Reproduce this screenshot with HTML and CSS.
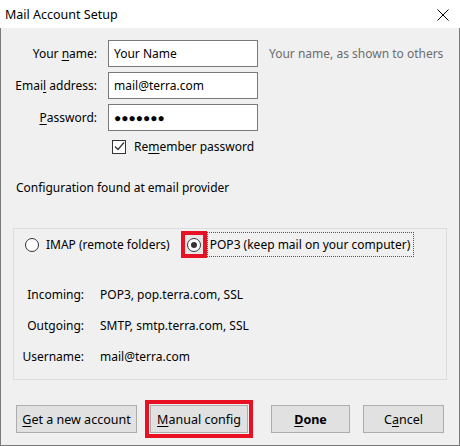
FILE: index.html
```html
<!DOCTYPE html>
<html lang="en">
<head>
  <meta charset="UTF-8" />
  <title>Mail Account Setup</title>
  <link rel="stylesheet" href="styles.css">
</head>
<body>
  <div class="window">
    <div class="titlebar">
      <span>Mail Account Setup</span>
      <svg class="close" width="12" height="12" viewBox="0 0 12 12">
        <path d="M0.5 0.5 L11.5 11.5 M11.5 0.5 L0.5 11.5" stroke="#000" stroke-width="1" fill="none"/>
      </svg>
    </div>

    <div class="content">
      <div class="fields">
        <label>Your <u>n</u>ame:</label>
        <div class="input">Your Name</div>
        <span class="hint">Your name, as shown to others</span>

        <label>Emai<u>l</u> address:</label>
        <div class="input">mail@terra.com</div>
        <span></span>

        <label><u>P</u>assword:</label>
        <div class="input dots">&#9679;&#9679;&#9679;&#9679;&#9679;&#9679;&#9679;</div>
        <span></span>
      </div>

      <div class="remember">
        <span class="checkbox">
          <svg width="11" height="11" viewBox="0 0 11 11">
            <path d="M1 5.5 L4 8.5 L10 1.5" stroke="#333" stroke-width="1.2" fill="none"/>
          </svg>
        </span>
        <span>Re<u>m</u>ember password</span>
      </div>

      <p class="found">Configuration found at email provider</p>

      <div class="group">
        <div class="protocols">
          <div class="option">
            <span class="radio"></span>
            <span>IMAP (remote folders)</span>
          </div>
          <div class="option">
            <span class="highlight"><span class="radio checked"></span></span>
            <span class="focus">POP3 (keep mail on your computer)</span>
          </div>
        </div>

        <div class="servers">
          <span class="key">Incoming:</span><span>POP3, pop.terra.com, SSL</span>
          <span class="key">Outgoing:</span><span>SMTP, smtp.terra.com, SSL</span>
          <span class="key">Username:</span><span>mail@terra.com</span>
        </div>
      </div>

      <div class="buttons">
        <button class="btn new"><u>G</u>et a new account</button>
        <span class="highlight wide"><button class="btn"><u>M</u>anual config</button></span>
        <button class="btn done"><u>D</u>one</button>
        <button class="btn cancel">C<u>a</u>ncel</button>
      </div>
    </div>
  </div>
</body>
</html>
```

FILE: styles.css
```css
body {
  margin: 0;
  font-family: 'Noto Sans', 'Liberation Sans', sans-serif;
  font-size: 12px;
  color: #000;
  background: #f0f0f0;
}

u {
  text-decoration: underline;
  text-underline-offset: 2px;
}

.window {
  width: 460px;
  height: 446px;
  display: flex;
  flex-direction: column;
}

.titlebar {
  height: 28px;
  background: #fff;
  display: flex;
  align-items: center;
  justify-content: space-between;
  padding: 0 11px 0 5px;
  font-size: 12.5px;
}

.close {
  margin-top: 1px;
}

.content {
  flex: 1;
  border: 1px solid #7a7a7a;
  border-top: none;
  background: #f0f0f0;
}

.fields {
  display: grid;
  grid-template-columns: 96px 150px auto;
  column-gap: 11px;
  row-gap: 5px;
  margin-top: 12px;
  align-items: center;
}

.fields label {
  text-align: right;
}

.input {
  height: 25px;
  border: 1px solid #7a7a7a;
  background: #fff;
  padding: 0 5px;
  display: flex;
  align-items: center;
}

.dots {
  font-size: 12px;
}

.hint {
  color: #6d6d6d;
}

.remember {
  display: flex;
  align-items: center;
  gap: 8px;
  margin: 8px 0 0 111px;
  height: 15px;
}

.checkbox {
  width: 12px;
  height: 12px;
  border: 1px solid #333;
  background: #fff;
  display: flex;
  align-items: center;
  justify-content: center;
}

.found {
  margin: 25px 0 0 15px;
}

.group {
  margin: 32px 12px 0 12px;
  height: 150px;
  border: 1px solid #dcdcdc;
}

.protocols {
  display: flex;
  align-items: center;
  margin: 2px 0 0 11px;
  gap: 11px;
}

.option {
  display: flex;
  align-items: center;
  gap: 7px;
}

.option:last-child {
  gap: 0;
}

.radio {
  width: 12px;
  height: 12px;
  border: 1px solid #333;
  border-radius: 50%;
  background: #fff;
  display: flex;
  align-items: center;
  justify-content: center;
}

.radio.checked::after {
  content: "";
  width: 6px;
  height: 6px;
  border-radius: 50%;
  background: #333;
}

.highlight {
  border: 4px solid #e81123;
  display: flex;
  align-items: center;
  justify-content: center;
}

.option .highlight {
  width: 18px;
  height: 19px;
  background: #e6e6e6;
}

.focus {
  border: 1px dotted #555;
  padding: 3px 3px 3px 2px;
}

.servers {
  display: grid;
  grid-template-columns: 70px auto;
  column-gap: 16px;
  row-gap: 14px;
  margin-top: 28px;
}

.servers span {
  line-height: 17px;
}

.key {
  text-align: right;
}

.buttons {
  display: flex;
  align-items: center;
  margin: 20px 0 0 15px;
}

.btn {
  font-family: inherit;
  font-size: 12.5px;
  height: 28px;
  background: #e1e1e1;
  border: 1px solid #adadad;
  padding: 0 2px;
  color: #000;
  white-space: nowrap;
}

.new {
  width: 121px;
}

.highlight.wide {
  margin-left: 8px;
  padding: 1px;
  background: #f0f0f0;
}

.highlight.wide .btn {
  width: 98px;
}

.done {
  font-weight: bold;
  width: 79px;
  margin-left: 18px;
}

.cancel {
  width: 81px;
  margin-left: 13px;
}
```
